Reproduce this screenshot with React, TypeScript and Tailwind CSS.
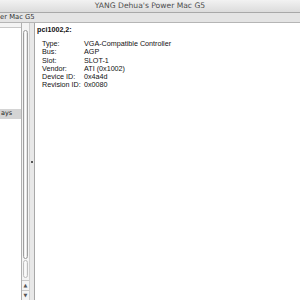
const rows: [string, string][] = [
  ["Type:", "VGA-Compatible Controller"],
  ["Bus:", "AGP"],
  ["Slot:", "SLOT-1"],
  ["Vendor:", "ATI (0x1002)"],
  ["Device ID:", "0x4a4d"],
  ["Revision ID:", "0x0080"],
];

export default function App() {
  return (
    <div className="w-[300px] h-[300px] overflow-hidden flex flex-col bg-white font-['DejaVu_Sans',sans-serif]">
      {/* title bar */}
      <div className="h-[13px] shrink-0 flex items-center justify-center bg-gradient-to-b from-[#f2f2f2] to-[#dcdcdc] border-b border-[#a8a8a8] text-[7.6px] text-[#4d4d4d]">
        YANG Dehua's Power Mac G5
      </div>
      {/* toolbar strip */}
      <div className="h-[10px] shrink-0 flex items-center bg-[#e4e4e4] border-b border-[#b5b5b5] text-[6.8px] text-[#333] whitespace-nowrap">
        er Mac G5
      </div>
      <div className="flex-1 flex min-h-0">
        {/* left source list */}
        <div className="w-[21px] shrink-0 flex flex-col bg-white">
          <div className="h-[5px] border-b border-[#c8c8c8] bg-[#f4f4f4]" />
          <div className="h-[81px]" />
          <div className="h-[10px] bg-[#d4d4d4] flex items-center pl-[1px] text-[6.5px] text-[#222] overflow-hidden whitespace-nowrap">
            ays
          </div>
        </div>
        {/* scrollbar */}
        <div className="w-[9px] shrink-0 flex flex-col bg-[#f4f4f4] border-l border-[#b0b0b0] border-r border-r-[#cfcfcf]">
          <div className="h-[5px] bg-[#f4f4f4]" />
          <div className="flex-1 flex flex-col px-[1px] pt-[2px]">
            <div className="h-[229px] rounded-full border border-[#9e9e9e] bg-gradient-to-r from-[#e6e6e6] via-white to-[#dadada]" />
            <div className="h-[18px] mt-[1px] rounded-full border border-[#bdbdbd] bg-gradient-to-r from-[#f4f4f4] via-[#fbfbfb] to-[#ececec]" />
          </div>
          <div className="h-[10px] flex items-center justify-center text-[5px] text-[#555] border-t border-[#c8c8c8]">▲</div>
          <div className="h-[10px] flex items-center justify-center text-[5px] text-[#555] border-t border-[#c8c8c8]">▼</div>
        </div>
        {/* splitter */}
        <div className="w-[5px] shrink-0 bg-[#e8e8e8] border-r border-[#a8a8a8] flex flex-col items-center justify-center">
          <div className="w-[2px] h-[2px] bg-[#555]" />
        </div>
        {/* detail pane */}
        <div className="flex-1 pl-[2px] pt-[3px] font-['Liberation_Sans',sans-serif] text-[7.2px] text-[#111] leading-[8.2px] whitespace-nowrap">
          <div className="font-bold">pci1002,2:</div>
          <div className="h-[6px]" />
          {rows.map(([k, v]) => (
            <div key={k} className="flex">
              <span className="w-[47px] pl-[5px] shrink-0">{k}</span>
              <span>{v}</span>
            </div>
          ))}
        </div>
      </div>
    </div>
  );
}
